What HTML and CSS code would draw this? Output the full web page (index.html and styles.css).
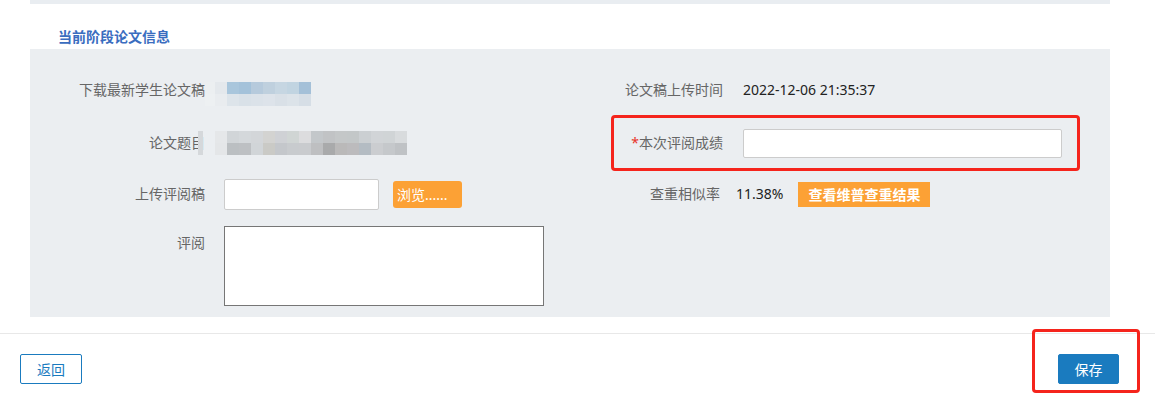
FILE: index.html
```html
<!DOCTYPE html>
<html lang="zh-CN">
<head>
    <meta charset="UTF-8">
    <meta name="viewport" content="width=device-width, initial-scale=1.0">
    <title>论文评阅</title>
    <link rel="stylesheet" href="styles.css">
</head>
<body>
    <div class="top-strip"></div>

    <h2 class="section-title">当前阶段论文信息</h2>

    <section class="panel">
        <div class="row row-first">
            <div class="field">
                <span class="label">下载最新学生论文稿</span>
                <span class="blur blur-file"></span>
            </div>
            <div class="field field-right">
                <span class="label">论文稿上传时间</span>
                <span class="value">2022-12-06 21:35:37</span>
            </div>
        </div>

        <div class="row row-score">
            <div class="field">
                <span class="label">论文题目</span>
                <span class="blur blur-title"></span>
            </div>
            <div class="field field-right field-score">
                <span class="label"><em class="required">*</em>本次评阅成绩</span>
                <input type="text" class="input-score">
            </div>
        </div>

        <div class="row row-upload">
            <div class="field">
                <span class="label">上传评阅稿</span>
                <input type="text" class="input-file">
                <button type="button" class="btn-browse">浏览......</button>
            </div>
            <div class="field field-right">
                <span class="label label-tight">查重相似率</span>
                <span class="value value-rate">11.38%</span>
                <button type="button" class="btn-check">查看维普查重结果</button>
            </div>
        </div>

        <div class="row row-review">
            <div class="field field-top">
                <span class="label">评阅</span>
                <textarea class="review"></textarea>
            </div>
        </div>
    </section>

    <footer class="actions">
        <button type="button" class="btn-back">返回</button>
        <div class="save-wrap">
            <button type="submit" class="btn-save">保存</button>
            <div class="mark-save"></div>
        </div>
    </footer>
</body>
</html>
```

FILE: styles.css
```css
body {
    margin: 0;
    padding: 0;
    min-height: 413px;
    background-color: #fff;
    font-family: "Noto Sans", "Noto Sans CJK SC", sans-serif;
    font-size: 14px;
    color: #666;
}

.top-strip {
    height: 4px;
    margin: 0 45px 0 30px;
    background-color: #e9edf1;
}

.section-title {
    margin: 0;
    padding: 24px 0 3px 58px;
    font-size: 14px;
    line-height: 18px;
    font-weight: bold;
    color: #3a6dbf;
}

/* grey info box */
.panel {
    margin: 0 45px 0 30px;
    padding: 25px 0 11px;
    background-color: #ebeef1;
}

.row {
    display: grid;
    grid-template-columns: 555px 525px;
    height: 32px;
    margin-bottom: 20px;
}

.row-score {
    height: 34px;
    margin-bottom: 18px;
}

.row-upload {
    margin-bottom: 16px;
}

.row-review {
    height: 80px;
    margin-bottom: 0;
}

.field {
    display: flex;
    align-items: center;
}

.field-top {
    align-items: flex-start;
}

.label {
    flex-shrink: 0;
    width: 175px;
    margin-right: 19px;
    text-align: right;
    line-height: 18px;
}

.field-right .label {
    width: 138px;
    margin-right: 20px;
}

.field-right .label-tight {
    width: 135px;
    margin-right: 13px;
    padding-right: 3px;
}

.field-top .label {
    margin-top: 8px;
}

.required {
    font-style: normal;
    color: #e8332a;
}

.value {
    color: #222;
    line-height: 18px;
}

/* pixelated (masked) values */
.blur {
    display: block;
    height: 24px;
    background-repeat: no-repeat;
}

.blur-file {
    width: 106px;
    margin-left: -19px;
    align-self: flex-end;
    background-image:
        linear-gradient(to right, #eceff1 0 10px, #e4e8ec 10px 22px, #a9c6dc 22px 34px, #a4c2da 34px 46px, #b6cadc 46px 58px, #bfd0de 58px 70px, #c6d6e2 70px 82px, #c1d4e1 82px 94px, #a4c0d8 94px 106px),
        linear-gradient(to right, #edf0f2 0 10px, #e9ecef 10px 22px, #dde4ea 22px 34px, #d9e1e8 34px 46px, #dbe2e9 46px 58px, #dde3ea 58px 70px, #d9e0e7 70px 82px, #dce3e9 82px 94px, #d6dee6 94px 106px);
    background-size: 100% 12px, 100% 12px;
    background-position: top, bottom;
}

.blur-title {
    width: 209px;
    margin-left: -26px;
    background-image:
        linear-gradient(to right, #d5d8db 0 5px, transparent 5px 17px, #e5e7e9 17px 29px, #d1d5d8 29px 41px, #d4d8db 41px 53px, #d3d6d9 53px 65px, #d3d3d1 65px 77px, #cfd1d5 77px 89px, #d0d5d4 89px 101px, #dcdcde 101px 113px, #c3c7ca 113px 125px, #c1c3c5 125px 137px, #c4c7c8 137px 149px, #c3c7c8 149px 161px, #cbcfd2 161px 173px, #d1d4d7 173px 185px, #d0d4d6 185px 197px, #d8dbdd 197px 209px),
        linear-gradient(to right, #d5d8db 0 5px, transparent 5px 17px, #e4e6e8 17px 29px, #bbbfc2 29px 41px, #bdc0c3 41px 53px, #d1d5d8 53px 65px, #cacac6 65px 77px, #c4c7cb 77px 89px, #c8cbce 89px 101px, #c9cbce 101px 113px, #bebfc1 113px 125px, #a9aaab 125px 137px, #bab9b9 137px 149px, #bcbbbd 149px 161px, #b4bcc3 161px 173px, #cbcdd0 173px 185px, #c5c8cb 185px 197px, #bfc2c5 197px 209px);
    background-size: 100% 12px, 100% 12px;
    background-position: top, bottom;
}

input[type="text"] {
    box-sizing: border-box;
    margin: 0;
    padding: 0 6px;
    border: 1px solid #ccc;
    border-radius: 2px;
    background-color: #fff;
    font-family: inherit;
    font-size: 14px;
}

.input-score {
    width: 319px;
    height: 29px;
}

.input-file {
    width: 155px;
    height: 31px;
}

.btn-browse {
    width: 69px;
    height: 27px;
    margin-left: 14px;
    padding: 0 0 0 4px;
    border: none;
    border-radius: 3px;
    background-color: #fca135;
    color: #fff;
    font-family: inherit;
    font-size: 14px;
    text-align: left;
    cursor: pointer;
}

.btn-check {
    width: 132px;
    height: 25px;
    margin-left: 15px;
    padding: 0;
    border: none;
    background-color: #fca135;
    color: #fff;
    font-family: inherit;
    font-size: 14px;
    font-weight: bold;
    cursor: pointer;
}

.review {
    box-sizing: border-box;
    width: 320px;
    height: 80px;
    margin: 0;
    border: 1px solid #767676;
    resize: none;
    font-family: inherit;
}

/* red annotation frames */
.field-score {
    position: relative;
}

.field-score::after {
    content: "";
    position: absolute;
    left: 26px;
    top: -11px;
    bottom: -11px;
    width: 469px;
    box-sizing: border-box;
    border: 3px solid #f5241c;
    border-radius: 4px;
}

.actions {
    display: flex;
    justify-content: space-between;
    align-items: flex-start;
    margin-top: 16px;
    padding: 20px 36px 29px 20px;
    border-top: 1px solid #e8e8e8;
}

.btn-back,
.btn-save {
    display: block;
    width: 62px;
    height: 30px;
    padding: 0;
    border: 1px solid #1a7bbf;
    border-radius: 2px;
    font-family: inherit;
    font-size: 14px;
    cursor: pointer;
}

.btn-back {
    background-color: #fff;
    color: #1a7bbf;
}

.btn-save {
    width: 61px;
    background-color: #1a7bbf;
    color: #fff;
}

.save-wrap {
    position: relative;
    height: 30px;
}

.mark-save {
    position: absolute;
    left: -26px;
    top: -25px;
    box-sizing: border-box;
    width: 108px;
    height: 64px;
    border: 3px solid #f5241c;
    border-radius: 4px;
    pointer-events: none;
}
```
